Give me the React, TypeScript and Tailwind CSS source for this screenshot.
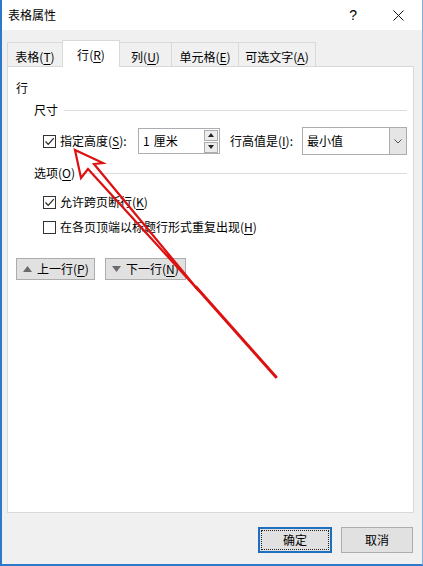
import React from "react";

const M = ({ t, k, s }: { t: string; k: string; s?: string }) => (
  <>
    {t}(<span className="underline underline-offset-[2px] decoration-1">{k}</span>){s}
  </>
);

const Check = ({ checked }: { checked: boolean }) => (
  <div className="w-[13px] h-[13px] border border-[#333333] bg-white flex items-center justify-center shrink-0">
    {checked && (
      <svg width="11" height="11" viewBox="0 0 11 11">
        <path d="M1.5 5.5 L4.2 8.3 L9.8 2.2" fill="none" stroke="#222" strokeWidth="1.2" />
      </svg>
    )}
  </div>
);

export default function App() {
  return (
    <div className="relative w-[423px] h-[566px] bg-[#f0f0f0] border-l-2 border-b-2 border-r border-l-[#2b79c8] border-b-[#2b79c8] border-r-[#7fb0de] flex flex-col font-['Noto_Sans_CJK_SC','Noto_Sans',sans-serif] text-[12px] text-black overflow-hidden">
      {/* Title bar */}
      <div className="h-[30px] bg-white flex items-center pl-[6px] shrink-0">
        <span className="leading-[16px]">表格属性</span>
        <span className="ml-auto text-[14px] leading-[16px] font-['Liberation_Sans',sans-serif]">?</span>
        <svg className="ml-[36px] mr-[18px]" width="11" height="11" viewBox="0 0 11 11">
          <path d="M0.5 0.5 L10.5 10.5 M10.5 0.5 L0.5 10.5" stroke="#111" strokeWidth="1" />
        </svg>
      </div>

      {/* Tabs */}
      <div className="pt-[10px] pl-[5px] flex items-end h-[36px] shrink-0">
        <div className="h-[24px] w-[56px] border-t border-l border-r border-[#d9d9d9] bg-[#f0f0f0] flex items-center justify-center pt-[4px]">
          <M t="表格" k="T" />
        </div>
        <div className="relative z-10 -ml-px mb-[-1px] h-[27px] w-[58px] border-t border-l border-r border-[#d9d9d9] bg-white flex items-center justify-center pt-[2px]">
          <M t="行" k="R" />
        </div>
        <div className="-ml-px h-[24px] w-[53px] border-t border-l border-r border-[#d9d9d9] bg-[#f0f0f0] flex items-center justify-center pt-[4px]">
          <M t="列" k="U" />
        </div>
        <div className="-ml-px h-[24px] w-[68px] border-t border-l border-r border-[#d9d9d9] bg-[#f0f0f0] flex items-center justify-center pt-[4px]">
          <M t="单元格" k="E" />
        </div>
        <div className="-ml-px h-[24px] w-[78px] border-t border-l border-r border-[#d9d9d9] bg-[#f0f0f0] flex items-center justify-center pt-[4px]">
          <M t="可选文字" k="A" />
        </div>
      </div>

      {/* Panel */}
      <div className="ml-[5px] w-[407px] h-[447px] bg-white border border-[#d9d9d9] flex flex-col pl-[8px] pr-[6px] shrink-0">
        <div className="mt-[13px] leading-[16px]">行</div>

        <div className="mt-[6px] flex items-center pl-[18px] gap-[6px] leading-[16px]">
          <span>尺寸</span>
          <div className="flex-1 h-px bg-[#dcdcdc]" />
        </div>

        <div className="mt-[9px] flex items-center h-[28px] pl-[27px]">
          <Check checked />
          <span className="ml-[4px] w-[78px] leading-[16px]">
            <M t="指定高度" k="S" s=":" />
          </span>
          <div className="w-[82px] h-[26px] border border-[#abadb3] flex items-center pl-[4px] pr-[1px]">
            <span className="flex-1 leading-[16px] flex gap-[4px]">
              <span>1</span>
              <span>厘米</span>
            </span>
            <div className="flex flex-col gap-[1px]">
              <div className="w-[14px] h-[11px] bg-[#ececec] border border-[#acacac] flex items-center justify-center">
                <svg width="6" height="4" viewBox="0 0 6 4"><path d="M0 4 L3 0 L6 4 Z" fill="#222" /></svg>
              </div>
              <div className="w-[14px] h-[11px] bg-[#ececec] border border-[#acacac] flex items-center justify-center">
                <svg width="6" height="4" viewBox="0 0 6 4"><path d="M0 0 L3 4 L6 0 Z" fill="#222" /></svg>
              </div>
            </div>
          </div>
          <span className="ml-[10px] w-[72px] leading-[16px]">
            <M t="行高值是" k="I" s=":" />
          </span>
          <div className="w-[105px] h-[28px] border border-[#acacac] flex items-stretch">
            <span className="flex-1 flex items-center pl-[4px] leading-[16px]">最小值</span>
            <div className="w-[17px] bg-[#e5e5e5] border-l border-[#acacac] flex items-center justify-center">
              <svg width="8" height="5" viewBox="0 0 8 5"><path d="M0.5 0.5 L4 4 L7.5 0.5" fill="none" stroke="#555" strokeWidth="1" /></svg>
            </div>
          </div>
        </div>

        <div className="mt-[10px] flex items-center pl-[18px] gap-[4px] leading-[16px]">
          <span><M t="选项" k="O" /></span>
          <div className="flex-1 h-px bg-[#dcdcdc]" />
        </div>

        <div className="mt-[13px] flex items-center h-[16px] pl-[27px]">
          <Check checked />
          <span className="ml-[4px] leading-[16px]"><M t="允许跨页断行" k="K" /></span>
        </div>

        <div className="mt-[9px] flex items-center h-[16px] pl-[27px]">
          <Check checked={false} />
          <span className="ml-[4px] leading-[16px]"><M t="在各页顶端以标题行形式重复出现" k="H" /></span>
        </div>

        <div className="mt-[23px] flex gap-[10px]">
          <div className="w-[79px] h-[22px] bg-[#e1e1e1] border border-[#adadad] flex items-center pl-[6px] gap-[5px]">
            <svg width="9" height="6" viewBox="0 0 9 6"><path d="M0 6 L4.5 0 L9 6 Z" fill="#6b6b6b" /></svg>
            <span className="leading-[16px]"><M t="上一行" k="P" /></span>
          </div>
          <div className="w-[81px] h-[22px] bg-[#e1e1e1] border border-[#adadad] flex items-center pl-[6px] gap-[5px]">
            <svg width="9" height="6" viewBox="0 0 9 6"><path d="M0 0 L4.5 6 L9 0 Z" fill="#6b6b6b" /></svg>
            <span className="leading-[16px]"><M t="下一行" k="N" /></span>
          </div>
        </div>
      </div>

      {/* Bottom buttons */}
      <div className="mt-[14px] flex justify-end pr-[9px]">
        <div className="w-[74px] h-[26px] bg-[#e1e1e1] border-2 border-[#1f6fc0] p-[1px] flex">
          <div className="flex-1 border border-dotted border-[#222] flex items-center justify-center leading-[16px]">确定</div>
        </div>
        <div className="ml-[9px] w-[72px] h-[26px] bg-[#e1e1e1] border border-[#adadad] flex items-center justify-center leading-[16px]">取消</div>
      </div>

      {/* Red annotation arrow */}
      <svg className="absolute left-[-2px] top-0 pointer-events-none z-20" width="423" height="566" viewBox="0 0 423 566">
        <path
          d="M75 150 L81 178 L88 169 L199 291 L94 164 L103 163 Z"
          fill="none"
          stroke="#dd1111"
          strokeWidth="2.2"
          strokeLinejoin="miter"
        />
        <path d="M196 287 L276 377" stroke="#dd1111" strokeWidth="3" strokeLinecap="round" />
      </svg>
    </div>
  );
}
